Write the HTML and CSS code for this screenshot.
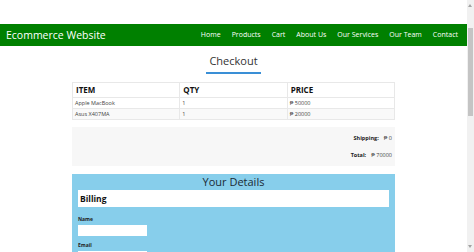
FILE: index.html
```html
<!DOCTYPE html>
<html>
<head>
	<title>Checkout</title>
	<meta name="viewport" content="width=device-width, initial-scale=1">
	<link rel="stylesheet" href="styles.css">
</head>
<body>
	<nav class="navbar">
		<a class="brand" href="#">Ecommerce Website</a>
		<ul class="nav-links">
			<li><a href="#">Home</a></li>
			<li><a href="#">Products</a></li>
			<li><a href="#">Cart</a></li>
			<li><a href="#">About Us</a></li>
			<li><a href="#">Our Services</a></li>
			<li><a href="#">Our Team</a></li>
			<li><a href="#">Contact</a></li>
		</ul>
	</nav>

	<div class="container">
		<div class="title-row">
			<h2 class="page-title">Checkout</h2>
		</div>

		<table class="cart-table">
			<thead>
				<tr>
					<th>ITEM</th>
					<th>QTY</th>
					<th>PRICE</th>
				</tr>
			</thead>
			<tbody>
				<tr>
					<td>Apple MacBook</td>
					<td>1</td>
					<td>&#8369; 50000</td>
				</tr>
				<tr class="alt">
					<td>Asus X407MA</td>
					<td>1</td>
					<td>&#8369; 20000</td>
				</tr>
			</tbody>
		</table>

		<div class="summary">
			<div class="summary-row">
				<span class="summary-label">Shipping:</span>
				<span>&#8369; 0</span>
			</div>
			<div class="summary-row">
				<span class="summary-label">Total:</span>
				<span>&#8369; 70000</span>
			</div>
		</div>

		<form class="details" method="" action="">
			<h2 class="details-title">Your Details</h2>
			<div class="section-head">Billing</div>

			<div class="form-row">
				<label for="name">Name</label>
				<input type="text" id="name" name="name">
			</div>
			<div class="form-row">
				<label for="email">Email</label>
				<input type="email" id="email" name="email">
			</div>
			<div class="form-row">
				<label for="phone">Phone</label>
				<input type="text" id="phone" name="phone">
			</div>
			<div class="form-row">
				<label for="address">Address</label>
				<input type="text" id="address" name="address">
			</div>

			<div class="section-head">Shipping</div>
			<div class="form-row">
				<label for="ship-address">Address</label>
				<input type="text" id="ship-address" name="ship-address">
			</div>
			<div class="form-row">
				<label for="city">City</label>
				<input type="text" id="city" name="city">
			</div>
			<div class="form-row">
				<label for="zip">Zip Code</label>
				<input type="text" id="zip" name="zip">
			</div>
			<div class="form-row">
				<button type="submit">Place Order</button>
			</div>
		</form>
	</div> <!-- .container -->

	<!-- window scrollbar -->
	<div class="scrollbar">
		<span class="arrow-up"></span>
		<div class="scroll-thumb"></div>
		<span class="arrow-down"></span>
	</div>
</body>
</html>
```

FILE: styles.css
```css
body {
	margin: 0 7px 0 0;
	font-family: "Open Sans", "Liberation Sans", sans-serif;
	color: #222;
	background-color: #fff;
}

.scrollbar {
	position: fixed;
	top: 0;
	right: 0;
	width: 7px;
	height: 100%;
	background-color: #f1f1f1;
}
.arrow-up,
.arrow-down {
	position: absolute;
	left: 1px;
	width: 0;
	height: 0;
	border-left: 2.5px solid transparent;
	border-right: 2.5px solid transparent;
}
.arrow-up {
	top: 4px;
	border-bottom: 3px solid #a3a3a3;
}
.arrow-down {
	bottom: 4px;
	border-top: 3px solid #a3a3a3;
}
.scroll-thumb {
	position: absolute;
	top: 28px;
	left: 1px;
	width: 5px;
	height: 88px;
	background-color: #c4c4c4;
}

.navbar {
	margin-top: 24px;
	height: 22px;
	background-color: #008000;
	display: flex;
	align-items: center;
	justify-content: space-between;
	padding: 0 9px 0 6px;
}
.brand {
	color: #fff;
	text-decoration: none;
	font-size: 10.5px;
}
.nav-links {
	list-style: none;
	margin: 0;
	padding: 0;
	display: flex;
	gap: 11px;
	font-size: 7px;
	line-height: 10px;
}
.nav-links a {
	color: #fff;
	text-decoration: none;
}

.container {
	width: 323px;
	margin: 0 auto;
	padding-bottom: 40px;
}

.title-row {
	text-align: center;
	padding-top: 2px;
}
.page-title {
	display: inline-block;
	margin: 0;
	font-size: 11px;
	line-height: 15px;
	font-weight: normal;
	color: #333;
	width: 55px;
	padding-bottom: 4px;
	border-bottom: 2px solid #3a8fd6;
}

.cart-table {
	width: 100%;
	margin-top: 8px;
	border-collapse: collapse;
	table-layout: fixed;
	border: 1px solid #e8e8e8;
}
.cart-table th {
	font-size: 8px;
	line-height: 10px;
	text-align: left;
	padding: 2px 3px;
	border: 1px solid #e8e8e8;
	color: #111;
}
.cart-table td {
	font-size: 5.5px;
	line-height: 6px;
	color: #444;
	padding: 2px;
	border: 1px solid #e8e8e8;
}
.cart-table .alt td {
	background-color: #f9f9f9;
}

.summary {
	margin-top: 7px;
	background-color: #f7f7f7;
	height: 39px;
	display: flex;
	flex-direction: column;
	align-items: flex-end;
	justify-content: center;
	gap: 9px;
	padding-right: 3px;
	font-size: 5.5px;
	color: #444;
}
.summary-row {
	display: flex;
	gap: 5px;
}
.summary-label {
	font-weight: bold;
	color: #222;
}

.details {
	margin-top: 8px;
	background-color: #87ceeb;
	padding: 0 6px 20px;
}
.details-title {
	margin: 0;
	text-align: center;
	font-size: 11px;
	font-weight: normal;
	color: #1b2a35;
	line-height: 16px;
}
.section-head {
	background-color: #fff;
	height: 17px;
	line-height: 17px;
	padding-left: 2px;
	font-size: 8.5px;
	font-weight: bold;
	color: #111;
	margin-bottom: 9px;
}
.form-row {
	margin-bottom: 6px;
}
.form-row label {
	display: block;
	font-size: 5px;
	line-height: 7px;
	font-weight: bold;
	color: #222;
	margin-bottom: 2px;
}
.form-row input {
	display: block;
	width: 69px;
	height: 11px;
	border: none;
	padding: 0;
	background-color: #fff;
}
.form-row button {
	font-size: 6px;
}
```
